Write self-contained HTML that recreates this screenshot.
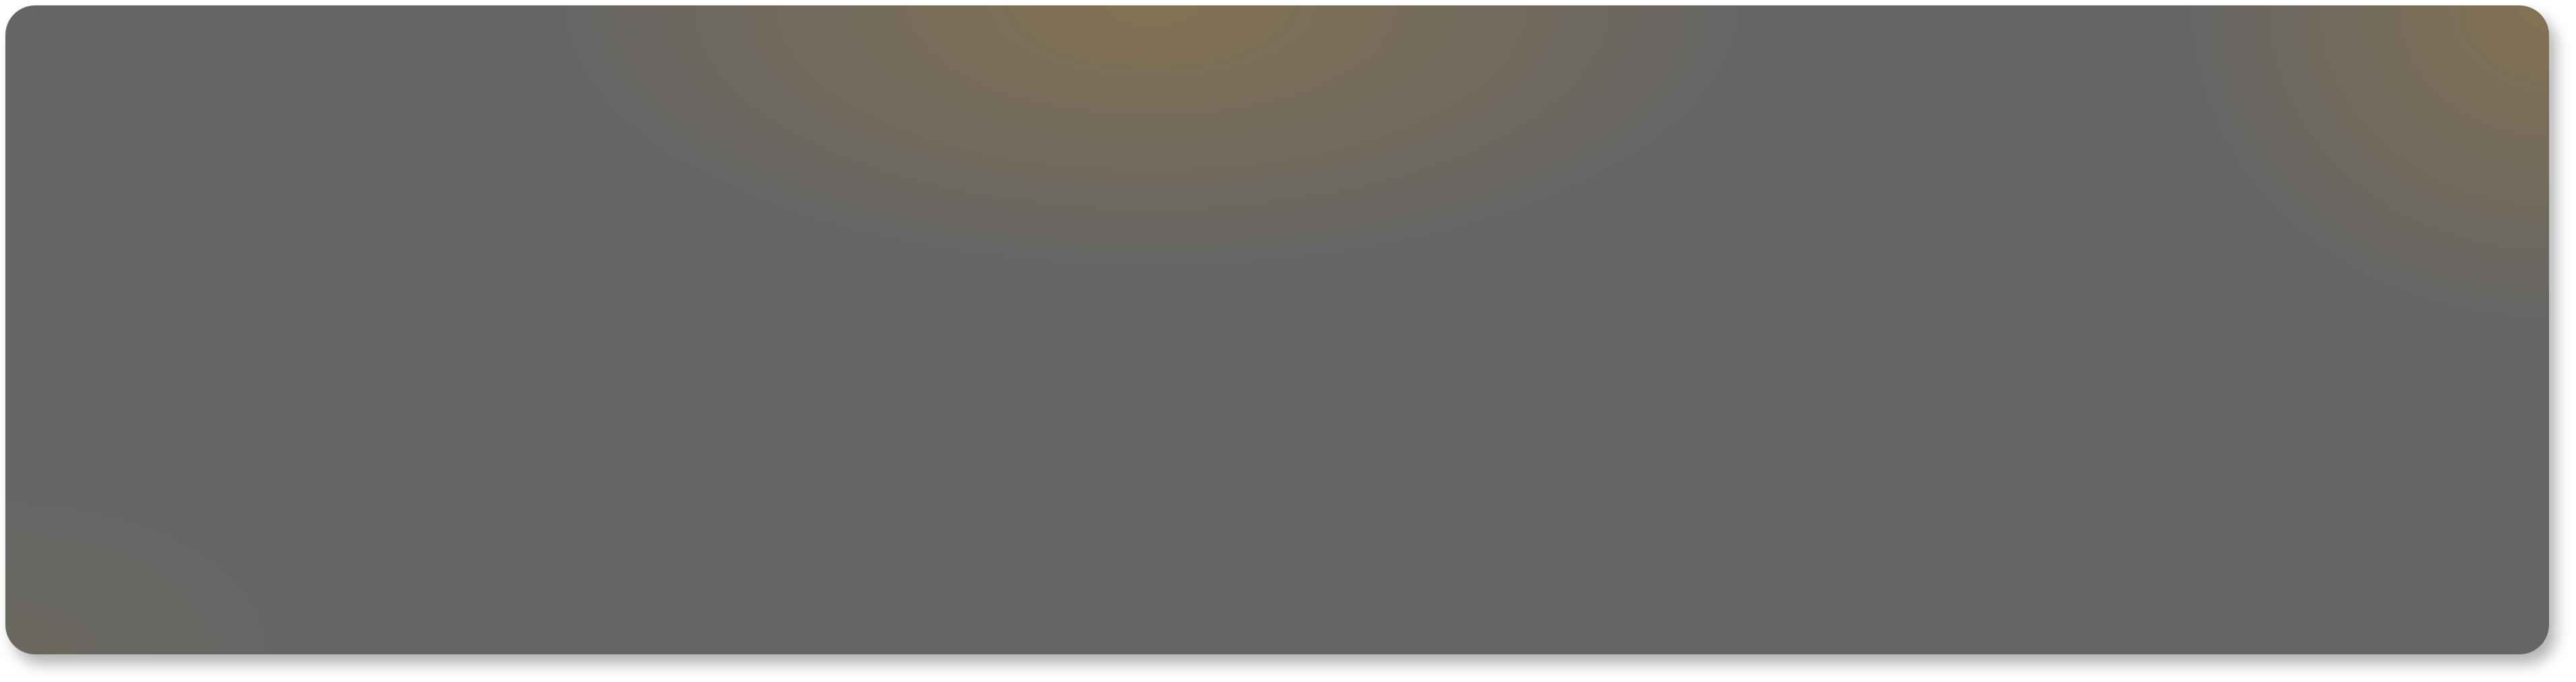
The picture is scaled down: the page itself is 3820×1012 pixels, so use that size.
<!DOCTYPE html>
<html><head><style>
html,body{margin:0;padding:0;background:#fff;width:3820px;height:1012px;overflow:hidden}
.card{position:absolute;left:8px;top:8px;width:3772px;height:963px;border-radius:44px;background:
radial-gradient(ellipse 900px 400px at 1700px 0px,rgba(135,115,80,0.9),rgba(135,115,80,0) 100%),
radial-gradient(ellipse 550px 480px at 3772px 0px,rgba(135,115,80,0.9),rgba(135,115,80,0) 100%),
radial-gradient(ellipse 450px 260px at 0px 963px,rgba(115,108,90,0.45),rgba(115,108,90,0) 100%),
#656565;box-shadow:10px 14px 22px rgba(0,0,0,0.3)}
</style></head><body><div class="card"></div></body></html>
